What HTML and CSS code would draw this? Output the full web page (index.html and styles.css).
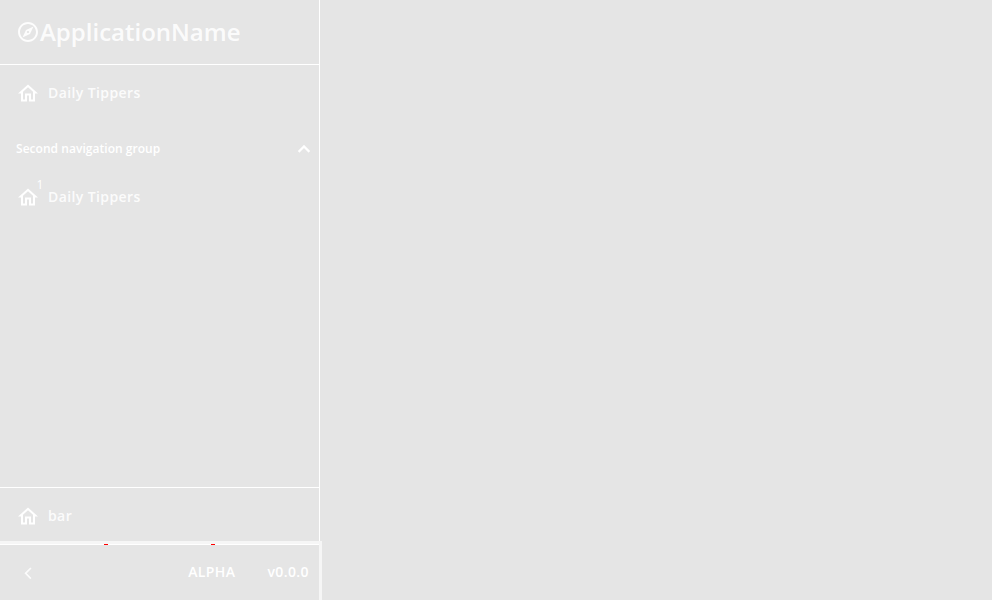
FILE: index.html
```html
<!DOCTYPE html>
<html lang="en">
<head>
<meta charset="utf-8">
<title>ApplicationName</title>
<link rel="stylesheet" href="styles.css">
</head>
<body>
<svg width="0" height="0" class="defs"><symbol id="home" viewBox="0 0 24 24"><path d="M12 5.69l5 4.5V18h-2v-6H9v6H7v-7.81l5-4.5M12 3L2 12h3v8h6v-6h2v6h6v-8h3L12 3z"/></symbol></svg>
<aside class="sidebar">
  <header class="brand">
    <svg class="icon" viewBox="0 0 24 24"><path d="M12 2C6.48 2 2 6.48 2 12s4.48 10 10 10 10-4.48 10-10S17.52 2 12 2zm0 18c-4.41 0-8-3.59-8-8s3.59-8 8-8 8 3.59 8 8-3.59 8-8 8zm-5.500-2.500l7.510-3.490L17.500 6.500 9.990 9.990 6.500 17.500zm5.500-6.600c.61 0 1.100.49 1.100 1.100s-.49 1.100-1.100 1.100-1.100-.49-1.100-1.100.49-1.100 1.100-1.100z"/></svg>
    <h1>ApplicationName</h1>
  </header>
  <nav class="main">
    <a class="item"><svg class="icon"><use href="#home"/></svg><span>Daily Tippers</span></a>
    <div class="group"><span>Second navigation group</span><svg class="chevron" viewBox="0 0 24 24"><path d="M12 8l-6 6 1.410 1.410L12 10.830l4.590 4.580L18 14z"/></svg></div>
    <a class="item"><svg class="icon"><use href="#home"/></svg><span>Daily Tippers</span><sup class="badge">1</sup></a>
  </nav>
  <nav class="bottom"><a class="item"><svg class="icon"><use href="#home"/></svg><span>bar</span></a></nav>
  <footer class="footer">
    <i class="mark first"></i><i class="mark second"></i>
    <svg class="back" viewBox="0 0 24 24"><path d="M15.500 7.600L14.300 6.400 8.400 12.300l5.900 5.900 1.200-1.200-4.700-4.700z"/></svg>
    <span class="stage">ALPHA</span><span>v0.0.0</span>
  </footer>
</aside>
</body>
</html>
```
FILE: styles.css
```css
* { box-sizing: border-box; }
body { margin: 0; height: 100vh; background: #e5e5e5; color: rgba(255, 255, 255, .9); font-family: "Open Sans", sans-serif; overflow: hidden; }
svg { fill: currentColor; flex: none; }
.defs { position: absolute; }
.sidebar { width: 322px; height: 600px; display: flex; flex-direction: column; }
.brand { width: 320px; height: 65px; padding-left: 16px; display: flex; align-items: center; border-right: 1px solid #fff; border-bottom: 1px solid #fff; }
h1 { margin: 0; font-size: 24px; line-height: 32px; font-weight: 600; }
.icon { width: 24px; height: 24px; }
.main { width: 320px; flex: 1; padding-top: 8px; border-right: 1px solid #fff; }
.item { height: 40px; padding-left: 16px; display: flex; align-items: center; gap: 8px; position: relative; font-size: 14px; font-weight: 600; letter-spacing: .4px; }
.item span, .group span, .footer span { padding-bottom: 2px; }
.item .icon { color: #fff; }
.item use { transform: translateY(.5px); }
.group { height: 48px; margin-top: 12px; padding: 0 3px 0 16px; display: flex; align-items: center; justify-content: space-between; color: #fff; font-size: 12px; font-weight: 600; letter-spacing: .04px; }
.chevron { width: 24px; height: 24px; stroke: currentColor; stroke-width: .4px; }
.group + .item { margin-top: 4px; }
.badge { position: absolute; left: 36.5px; top: 0; font-size: 12px; line-height: 16px; font-weight: 500; color: #fff; }
.bottom { width: 320px; height: 54px; padding-top: 8px; border-top: 1px solid #fff; border-right: 1px solid #fff; }
.footer { height: 59px; display: flex; align-items: center; position: relative; padding: 0 10px 0 16px; border-top: 3px solid #f6f6f6; border-right: 3px solid #f6f6f6; box-shadow: inset 0 1px #fff; font-size: 14px; font-weight: 600; letter-spacing: .4px; color: #fff; }
.back { width: 24px; height: 24px; margin-top: 2px; opacity: .87; }
.stage { margin: 0 32px 0 auto; }
.mark { position: absolute; top: 0; width: 4px; height: 1px; background: #f00; }
.first { left: 104px; }
.second { left: 211px; }
```
